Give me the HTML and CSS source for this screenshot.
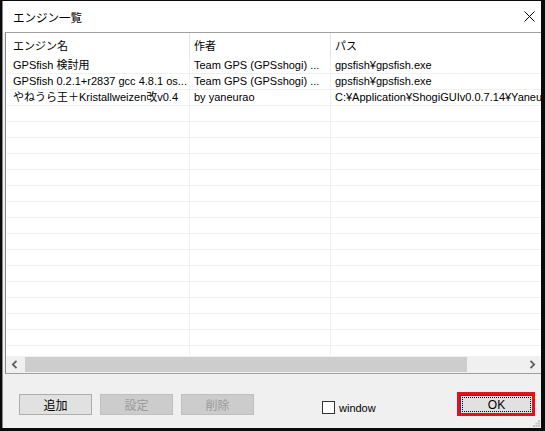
FILE: index.html
```html
<!DOCTYPE html>
<html lang="ja">
<head>
<meta charset="utf-8">
<title>エンジン一覧</title>
<link rel="stylesheet" href="styles.css">
</head>
<body>
<div class="window">
  <div class="titlebar">
    <span class="title">エンジン一覧</span>
    <svg class="close" width="11" height="11" viewBox="0 0 11 11"><path d="M0.5 0.5 L10.5 10.5 M10.5 0.5 L0.5 10.5" stroke="#000" stroke-width="1" fill="none"/></svg>
  </div>
  <div class="list">
    <div class="row header">
      <div class="cell c1">エンジン名</div>
      <div class="cell c2">作者</div>
      <div class="cell c3">パス</div>
    </div>
    <div class="rows">
      <div class="row"><div class="cell c1">GPSfish 検討用</div><div class="cell c2">Team GPS (GPSshogi) ...</div><div class="cell c3">gpsfish¥gpsfish.exe</div></div>
      <div class="row"><div class="cell c1">GPSfish 0.2.1+r2837 gcc 4.8.1 os...</div><div class="cell c2">Team GPS (GPSshogi) ...</div><div class="cell c3">gpsfish¥gpsfish.exe</div></div>
      <div class="row"><div class="cell c1">やねうら王＋Kristallweizen改v0.4</div><div class="cell c2">by yaneurao</div><div class="cell c3">C:¥Application¥ShogiGUIv0.0.7.14¥YaneuraOu</div></div>
      <div class="row"><div class="cell c1"></div><div class="cell c2"></div><div class="cell c3"></div></div>
      <div class="row"><div class="cell c1"></div><div class="cell c2"></div><div class="cell c3"></div></div>
      <div class="row"><div class="cell c1"></div><div class="cell c2"></div><div class="cell c3"></div></div>
      <div class="row"><div class="cell c1"></div><div class="cell c2"></div><div class="cell c3"></div></div>
      <div class="row"><div class="cell c1"></div><div class="cell c2"></div><div class="cell c3"></div></div>
      <div class="row"><div class="cell c1"></div><div class="cell c2"></div><div class="cell c3"></div></div>
      <div class="row"><div class="cell c1"></div><div class="cell c2"></div><div class="cell c3"></div></div>
      <div class="row"><div class="cell c1"></div><div class="cell c2"></div><div class="cell c3"></div></div>
      <div class="row"><div class="cell c1"></div><div class="cell c2"></div><div class="cell c3"></div></div>
      <div class="row"><div class="cell c1"></div><div class="cell c2"></div><div class="cell c3"></div></div>
      <div class="row"><div class="cell c1"></div><div class="cell c2"></div><div class="cell c3"></div></div>
      <div class="row"><div class="cell c1"></div><div class="cell c2"></div><div class="cell c3"></div></div>
      <div class="row"><div class="cell c1"></div><div class="cell c2"></div><div class="cell c3"></div></div>
      <div class="row"><div class="cell c1"></div><div class="cell c2"></div><div class="cell c3"></div></div>
      <div class="row"><div class="cell c1"></div><div class="cell c2"></div><div class="cell c3"></div></div>
      <div class="row"><div class="cell c1"></div><div class="cell c2"></div><div class="cell c3"></div></div>
    </div>
    <div class="hscroll">
      <div class="sbtn">
        <svg width="7" height="9" viewBox="0 0 7 9"><path d="M5.5 0.8 L1.8 4.5 L5.5 8.2" stroke="#606060" stroke-width="1.8" fill="none"/></svg>
      </div>
      <div class="track"><div class="thumb"></div></div>
      <div class="sbtn">
        <svg width="7" height="9" viewBox="0 0 7 9"><path d="M1.5 0.8 L5.2 4.5 L1.5 8.2" stroke="#606060" stroke-width="1.8" fill="none"/></svg>
      </div>
    </div>
  </div>
  <div class="footer">
    <button class="btn">追加</button>
    <button class="btn disabled">設定</button>
    <button class="btn disabled">削除</button>
    <label class="check"><span class="box"></span><span>window</span></label>
    <div class="ok-mark"><button class="okbtn"><span class="focus">OK</span></button></div>
    <svg class="grip" width="7" height="7" viewBox="0 0 7 7">
      <rect x="5" y="0" width="2" height="2" fill="#c4c4c4"/>
      <rect x="2.5" y="2.5" width="2" height="2" fill="#c4c4c4"/>
      <rect x="5" y="2.5" width="2" height="2" fill="#c4c4c4"/>
      <rect x="0" y="5" width="2" height="2" fill="#c4c4c4"/>
      <rect x="2.5" y="5" width="2" height="2" fill="#c4c4c4"/>
      <rect x="5" y="5" width="2" height="2" fill="#c4c4c4"/>
    </svg>
  </div>
</div>
</body>
</html>
```
FILE: styles.css
```css
* { box-sizing: border-box; }
html, body {
  margin: 0;
  padding: 0;
  width: 545px;
  height: 431px;
  overflow: hidden;
  background: #0a0a0a;
}
body {
  font-family: "Liberation Sans", "Noto Sans CJK JP", sans-serif;
  font-size: 11px;
  color: #000;
}
.window {
  position: relative;
  margin: 1px 0 0 2px;
  width: 539px;
  height: 427px;
  background: #f0f0f0;
  border-left: 1px solid #8a8a8a;
  display: flex;
  flex-direction: column;
}
.titlebar {
  height: 31px;
  background: #fff;
  display: flex;
  align-items: center;
  padding-left: 10px;
  padding-right: 6px;
  flex: none;
}
.title {
  font-size: 11.5px;
  flex: 1;
  padding-top: 1px;
}
.close { display: block; margin-right: 0; }
.list {
  margin-left: 2px;
  border-top: 1px solid #a0a0a0;
  border-left: 1px solid #828790;
  border-bottom: 1px solid #a0a0a0;
  background: #fff;
  display: flex;
  flex-direction: column;
  flex: none;
  height: 342px;
  overflow: hidden;
}
.row {
  display: grid;
  grid-template-columns: 184px 141px 1fr;
  height: 16px;
  border-bottom: 1px solid #f0f0f0;
  flex: none;
}
.cell {
  white-space: nowrap;
  overflow: hidden;
  border-right: 1px solid #f0f0f0;
  line-height: 15px;
  padding-left: 4px;
}
.cell.c1 { padding-left: 7px; }
.cell.c3 { border-right: none; }
.header {
  height: 25px;
  border-bottom: none;
}
.header .cell {
  line-height: 23px;
  padding-top: 2px;
  border-right-color: #e5e5e5;
}
.rows {
  height: 298px;
  overflow: hidden;
  flex: none;
}
.hscroll {
  height: 17px;
  background: #f0f0f0;
  display: flex;
  flex: none;
}
.sbtn {
  width: 17px;
  display: flex;
  align-items: center;
  justify-content: center;
  flex: none;
}
.track {
  flex: 1;
  display: flex;
  align-items: center;
  padding-left: 2px;
}
.thumb {
  width: 442px;
  height: 15px;
  background: #cdcdcd;
}
.footer {
  flex: 1;
  display: flex;
  align-items: flex-start;
  padding: 20px 0 0 16px;
}
.btn {
  width: 73px;
  height: 21px;
  margin: 0 8px 0 0;
  padding: 0;
  font-family: "Liberation Sans", "Noto Sans CJK JP", sans-serif;
  font-size: 12px;
  color: #000;
  background: #e1e1e1;
  border: 1px solid #adadad;
  border-radius: 0;
}
.btn.disabled {
  background: #cccccc;
  border-color: #bfbfbf;
  color: #9a9a9a;
}
.check {
  display: flex;
  align-items: center;
  margin-left: 60px;
  margin-top: 7px;
  height: 13px;
}
.box {
  width: 13px;
  height: 13px;
  border: 1px solid #333;
  background: #fff;
  margin-right: 4px;
}
.ok-mark {
  margin-left: auto;
  margin-right: 6px;
  margin-top: -2px;
  border: 3px solid #e3101d;
  width: 78px;
  height: 24px;
}
.okbtn {
  display: block;
  width: 100%;
  height: 100%;
  margin: 0;
  padding: 1px;
  background: #e1e1e1;
  border: none;
  border-left: 1px solid #2e3596;
  border-top: 1px solid #2e3596;
  font-family: "Liberation Sans", sans-serif;
  font-size: 12px;
  color: #000;
}
.focus {
  display: flex;
  align-items: center;
  justify-content: center;
  width: 100%;
  height: 100%;
  border: 1px dotted #000;
}
.grip {
  position: absolute;
  right: 1px;
  bottom: 1px;
}
```
